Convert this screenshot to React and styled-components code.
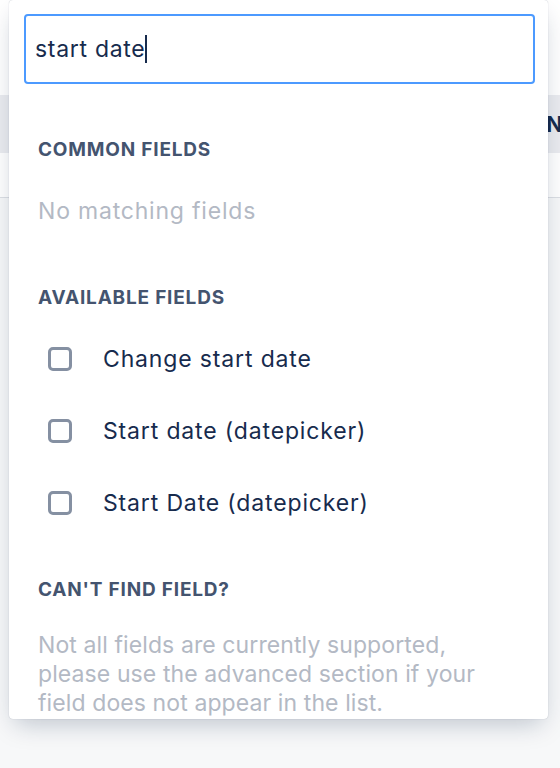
import styled, { createGlobalStyle } from "styled-components";

const Global = createGlobalStyle`
  html, body {
    margin: 0;
    padding: 0;
    background: #f7f8f9;
    font-family: Inter, "Noto Sans", "Liberation Sans", sans-serif;
    -webkit-font-smoothing: antialiased;
  }
  * { box-sizing: border-box; }
`;

const Page = styled.div`
  position: relative;
  width: 560px;
  height: 768px;
  overflow: hidden;
`;

const Backdrop = styled.div`
  display: flex;
  flex-direction: column;
`;

const Blank = styled.div`
  height: ${(p) => p.$h}px;
  background: ${(p) => p.$bg || "#ffffff"};
  border-bottom: ${(p) => (p.$line ? "1px solid #dcdfe4" : "none")};
`;

const HeaderRow = styled.div`
  height: 58px;
  background: #ebecf0;
  display: flex;
  align-items: center;
  padding-left: 546px;
  font-size: 22px;
  font-weight: 700;
  color: #172b4d;
  white-space: nowrap;
`;

const Popover = styled.div`
  position: absolute;
  left: 9px;
  top: 0;
  width: 539px;
  height: 719px;
  background: #ffffff;
  border-radius: 4px;
  box-shadow: 0 10px 24px -6px rgba(9, 30, 66, 0.25),
    0 0 1px rgba(9, 30, 66, 0.31);
  overflow: hidden;
  display: flex;
  flex-direction: column;
`;

const Search = styled.div`
  margin: 14px 13px 0 15px;
  height: 70px;
  border: 2px solid #4c9aff;
  border-radius: 4px;
  display: flex;
  align-items: center;
  padding-left: 9px;
  font-size: 23px;
  letter-spacing: 0.7px;
  color: #172b4d;
`;

const Caret = styled.span`
  display: inline-block;
  width: 1.5px;
  height: 28px;
  background: #172b4d;
  margin-left: 0;
`;

const Body = styled.div`
  padding-left: 29px;
  padding-right: 36px;
  display: flex;
  flex-direction: column;
`;

const Heading = styled.div`
  margin-top: ${(p) => p.$mt}px;
  line-height: 24px;
  font-size: 19px;
  font-weight: 700;
  letter-spacing: 0.8px;
  text-transform: uppercase;
  color: #44546f;
`;

const Muted = styled.div`
  margin-top: ${(p) => p.$mt}px;
  font-size: 23px;
  line-height: ${(p) => p.$lh || 30}px;
  letter-spacing: ${(p) => p.$ls || 0.1}px;
  color: #b3b9c4;
`;

const List = styled.div`
  margin-top: 13px;
  display: flex;
  flex-direction: column;
`;

const Row = styled.div`
  height: 72px;
  display: flex;
  align-items: center;
  padding-left: 10px;
  gap: 31px;
  font-size: 23px;
  letter-spacing: 0.85px;
  color: #172b4d;
`;

const Box = styled.span`
  width: 24px;
  height: 24px;
  border: 3px solid #8590a2;
  border-radius: 5px;
  background: #ffffff;
  flex-shrink: 0;
`;

const fields = ["Change start date", "Start date (datepicker)", "Start Date (datepicker)"];

export default function App() {
  return (
    <Page>
      <Global />
      <Backdrop>
        <Blank $h={95} />
        <HeaderRow>Name</HeaderRow>
        <Blank $h={45} $line />
        <Blank $h={570} $bg="#f7f8f9" />
      </Backdrop>
      <Popover>
        <Search>
          start date
          <Caret />
        </Search>
        <Body>
          <Heading $mt={54}>Common fields</Heading>
          <Muted $mt={34} $ls={0.8}>No matching fields</Muted>
          <Heading $mt={60}>Available fields</Heading>
          <List>
            {fields.map((f) => (
              <Row key={f}>
                <Box />
                {f}
              </Row>
            ))}
          </List>
          <Heading $mt={39}>Can't find field?</Heading>
          <Muted $mt={29} $lh={29}>
            Not all fields are currently supported, please use the advanced
            section if your field does not appear in the list.
          </Muted>
        </Body>
      </Popover>
    </Page>
  );
}
